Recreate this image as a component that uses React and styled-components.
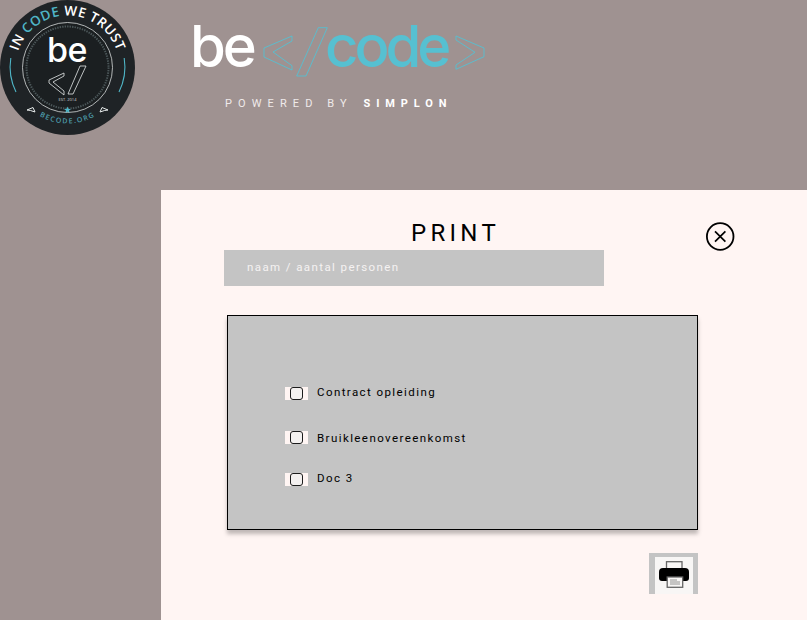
import React from "react";
import styled, { createGlobalStyle } from "styled-components";

const GlobalStyle = createGlobalStyle`
  html, body {
    margin: 0;
    padding: 0;
    background: #9f9291;
  }
  body {
    font-family: "Roboto", "Liberation Sans", sans-serif;
  }
`;

const Page = styled.div`
  width: 807px;
  height: 620px;
  overflow: hidden;
  background: #9f9291;
  display: flex;
  flex-direction: column;
`;

const Header = styled.header`
  height: 190px;
  flex: 0 0 190px;
  display: flex;
  align-items: flex-start;
`;

const Badge = styled.svg`
  width: 135px;
  height: 135px;
  flex: 0 0 135px;
  display: block;
`;

const Brand = styled.div`
  margin-left: 55px;
  padding-top: 10px;
  display: flex;
  flex-direction: column;
`;

const Wordmark = styled.svg`
  display: block;
  width: 296px;
  height: 74px;
`;

const Powered = styled.div`
  margin-top: 13px;
  margin-left: 35px;
  font-size: 11px;
  line-height: 14px;
  letter-spacing: 6.1px;
  color: #efeaea;
  font-weight: 400;
  white-space: nowrap;

  b {
    margin-left: 2px;
    font-weight: 700;
    letter-spacing: 5.9px;
    color: #ffffff;
  }
`;

const Panel = styled.main`
  flex: 1;
  margin-left: 161px;
  padding: 30px 0 0 63px;
  background: #fff5f3;
  box-sizing: border-box;
`;

const TitleRow = styled.div`
  width: 511px;
  height: 30px;
  padding-left: 187px;
  box-sizing: border-box;
  display: flex;
  justify-content: space-between;
  align-items: flex-start;
`;

const Title = styled.h1`
  margin: 0;
  font-size: 24px;
  line-height: 26px;
  font-weight: 400;
  letter-spacing: 4.3px;
  color: #000000;
`;

const CloseButton = styled.button`
  width: 30px;
  height: 30px;
  padding: 0;
  margin-top: 1px;
  border: none;
  background: transparent;
  display: block;
`;

const NameInput = styled.input`
  display: block;
  width: 380px;
  height: 36px;
  padding: 0 23px 2px;
  border: none;
  border-radius: 0;
  box-sizing: border-box;
  background: #c4c4c4;
  font-family: "Roboto", "Liberation Sans", sans-serif;
  font-size: 11.5px;
  letter-spacing: 1.4px;
  color: #ffffff;

  &::placeholder {
    color: #f5f2f2;
    opacity: 1;
  }
`;

const DocBox = styled.section`
  width: 471px;
  height: 215px;
  margin: 29px 0 0 3px;
  padding-top: 71px;
  box-sizing: border-box;
  border: 1px solid #000000;
  background: #c4c4c4;
  box-shadow: 0 4px 4px rgba(0, 0, 0, 0.25);
`;

const DocRow = styled.label`
  height: 13px;
  margin-left: 57px;
  margin-bottom: ${(p) => p.$gap}px;
  display: flex;
  align-items: center;
`;

const CheckWrap = styled.span`
  width: 23px;
  height: 13px;
  flex: 0 0 23px;
  background: #fff5f3;
  display: flex;
  justify-content: center;
  align-items: center;
`;

const Check = styled.input`
  appearance: none;
  width: 13px;
  height: 13px;
  margin: 0;
  border: 1px solid #1c1c1c;
  border-radius: 3px;
  box-sizing: border-box;
  background: #f4f1f0;
`;

const DocLabel = styled.span`
  margin-left: 9px;
  position: relative;
  top: ${(p) => p.$shift}px;
  font-size: 11.5px;
  letter-spacing: 1.42px;
  color: #000000;
  white-space: nowrap;
`;

const PrintRow = styled.div`
  width: 474px;
  margin-top: 23px;
  display: flex;
  justify-content: flex-end;
`;

const PrintButton = styled.button`
  width: 49px;
  height: 41px;
  padding: 4px 0 0 4px;
  border: solid #c4c4c4;
  border-width: 4px 5px 0 6px;
  background: #f8f6f5;
  box-sizing: border-box;
  display: flex;
  justify-content: flex-start;
  align-items: flex-start;
`;

const docs = [
  { name: "Contract opleiding", gap: 31, shift: -2 },
  { name: "Bruikleenovereenkomst", gap: 29, shift: 0 },
  { name: "Doc 3", gap: 0, shift: -2 },
];

function LogoBadge() {
  return (
    <Badge viewBox="0 0 135 135" role="img" aria-label="BeCode">
      <defs>
        <path id="topArc" d="M 15.5 67.5 A 52 52 0 0 1 119.5 67.5" />
        <path id="bottomArc" d="M 17.5 92.7 A 56 56 0 0 0 117.5 92.7" />
      </defs>
      <circle cx="67.5" cy="67.5" r="67.5" fill="#1f2326" />
      <circle cx="67.5" cy="67.5" r="45" fill="#1b1f21" stroke="#d8dcdc" strokeWidth="0.8" />
      <circle cx="67.5" cy="67.5" r="41" fill="none" stroke="#5f6d70" strokeWidth="2" strokeDasharray="1.4 1.1" opacity="0.7" />
      <text fontFamily="Open Sans, sans-serif" fontSize="13.5" fontWeight="600" fill="#ffffff" letterSpacing="0.4">
        <textPath href="#topArc" startOffset="50%" textAnchor="middle">
          IN <tspan fill="#4fb5c6">CODE</tspan> WE TRUST
        </textPath>
      </text>
      <text fontFamily="Open Sans, sans-serif" fontSize="7" fontWeight="600" fill="#4d9dac" letterSpacing="1.4">
        <textPath href="#bottomArc" startOffset="50%" textAnchor="middle">
          BECODE.ORG
        </textPath>
      </text>
      <path d="M 10.8 58 A 57 57 0 0 0 16 92" fill="none" stroke="#4fb5c6" strokeWidth="1.1" />
      <path d="M 124.2 58 A 57 57 0 0 1 119 92" fill="none" stroke="#4fb5c6" strokeWidth="1.1" />
      <path d="M 27 110 L 33 107.5 L 35 112 L 30.5 110.5 Z" fill="none" stroke="#e8ecec" strokeWidth="1" />
      <path d="M 108 110 L 102 107.5 L 100 112 L 104.5 110.5 Z" fill="none" stroke="#e8ecec" strokeWidth="1" />
      <path d="M 67.5 106.5 l 1 2.4 l 2.5 0.1 l -2 1.6 l 0.7 2.5 l -2.2 -1.4 l -2.2 1.4 l 0.7 -2.5 l -2 -1.6 l 2.5 -0.1 Z" fill="#4fb5c6" />
      <text x="67" y="62" textAnchor="middle" fontFamily="Inter, sans-serif" fontSize="34" fontWeight="500" fill="#ffffff" letterSpacing="-0.5">
        be
      </text>
      <path d="M 64 73 L 49 80 L 49 83 L 64 95 L 64 91 L 53 82 L 64 76 Z" fill="none" stroke="#e4e8e8" strokeWidth="0.8" />
      <path d="M 80 66 L 86 66 L 73 94 L 68 94 Z" fill="none" stroke="#e4e8e8" strokeWidth="0.8" />
      <text x="67.5" y="101" textAnchor="middle" fontFamily="Open Sans, sans-serif" fontSize="4" fill="#d8dcdc">
        EST. 2014
      </text>
    </Badge>
  );
}

function BrandMark() {
  return (
    <Wordmark viewBox="-2 -14 296 74" role="img" aria-label="be code">
      <text x="-2" y="43" fontFamily="Inter, sans-serif" fontSize="58" fontWeight="500" fill="#ffffff" letterSpacing="-3">
        be
      </text>
      <path d="M 100 12 L 72 24 L 72 33 L 100 46 L 100 41.7 L 81 28 L 100 17 Z" fill="none" stroke="#56c0d1" strokeWidth="0.9" />
      <path d="M 126.3 3.7 L 135.3 3.7 L 114 52 L 104.7 52 Z" fill="none" stroke="#56c0d1" strokeWidth="0.9" />
      <text x="133" y="43" fontFamily="Inter, sans-serif" fontSize="58" fontWeight="500" fill="#56c0d1" letterSpacing="-4">
        code
      </text>
      <path d="M 264 12 L 292 24 L 292 32.7 L 264 45.3 L 264 41 L 283 28.3 L 264 16 Z" fill="none" stroke="#56c0d1" strokeWidth="0.9" />
    </Wordmark>
  );
}

function CloseIcon() {
  return (
    <svg width="30" height="30" viewBox="0 0 30 30" fill="none" stroke="#000000" strokeWidth="1.8">
      <circle cx="15.2" cy="15.5" r="13.3" />
      <path d="M10 10.3 L20.4 20.7 M20.4 10.3 L10 20.7" strokeWidth="1.7" />
    </svg>
  );
}

function PrinterIcon() {
  return (
    <svg width="30" height="27" viewBox="0 0 30 27">
      <rect x="7.5" y="0.7" width="15.5" height="9" fill="#f8f6f5" stroke="#666666" strokeWidth="1.3" />
      <path d="M4 7 H26 Q30 7 30 11 V17 Q30 20 27 20 H3 Q0 20 0 17 V11 Q0 7 4 7 Z" fill="#000000" />
      <rect x="8.2" y="16" width="15.5" height="10.3" fill="#f8f6f5" stroke="#666666" strokeWidth="1.3" />
      <path d="M11 19 H18 M11 21 H21 M11 23 H21" stroke="#888888" strokeWidth="0.9" />
    </svg>
  );
}

export default function App() {
  return (
    <>
      <GlobalStyle />
      <Page>
        <Header>
          <LogoBadge />
          <Brand>
            <BrandMark />
            <Powered>
              POWERED BY <b>SIMPLON</b>
            </Powered>
          </Brand>
        </Header>
        <Panel>
          <TitleRow>
            <Title>PRINT</Title>
            <CloseButton aria-label="Sluiten">
              <CloseIcon />
            </CloseButton>
          </TitleRow>
          <NameInput placeholder="naam / aantal personen" />
          <DocBox>
            {docs.map((doc) => (
              <DocRow key={doc.name} $gap={doc.gap}>
                <CheckWrap>
                  <Check type="checkbox" />
                </CheckWrap>
                <DocLabel $shift={doc.shift}>{doc.name}</DocLabel>
              </DocRow>
            ))}
          </DocBox>
          <PrintRow>
            <PrintButton aria-label="Print">
              <PrinterIcon />
            </PrintButton>
          </PrintRow>
        </Panel>
      </Page>
    </>
  );
}
